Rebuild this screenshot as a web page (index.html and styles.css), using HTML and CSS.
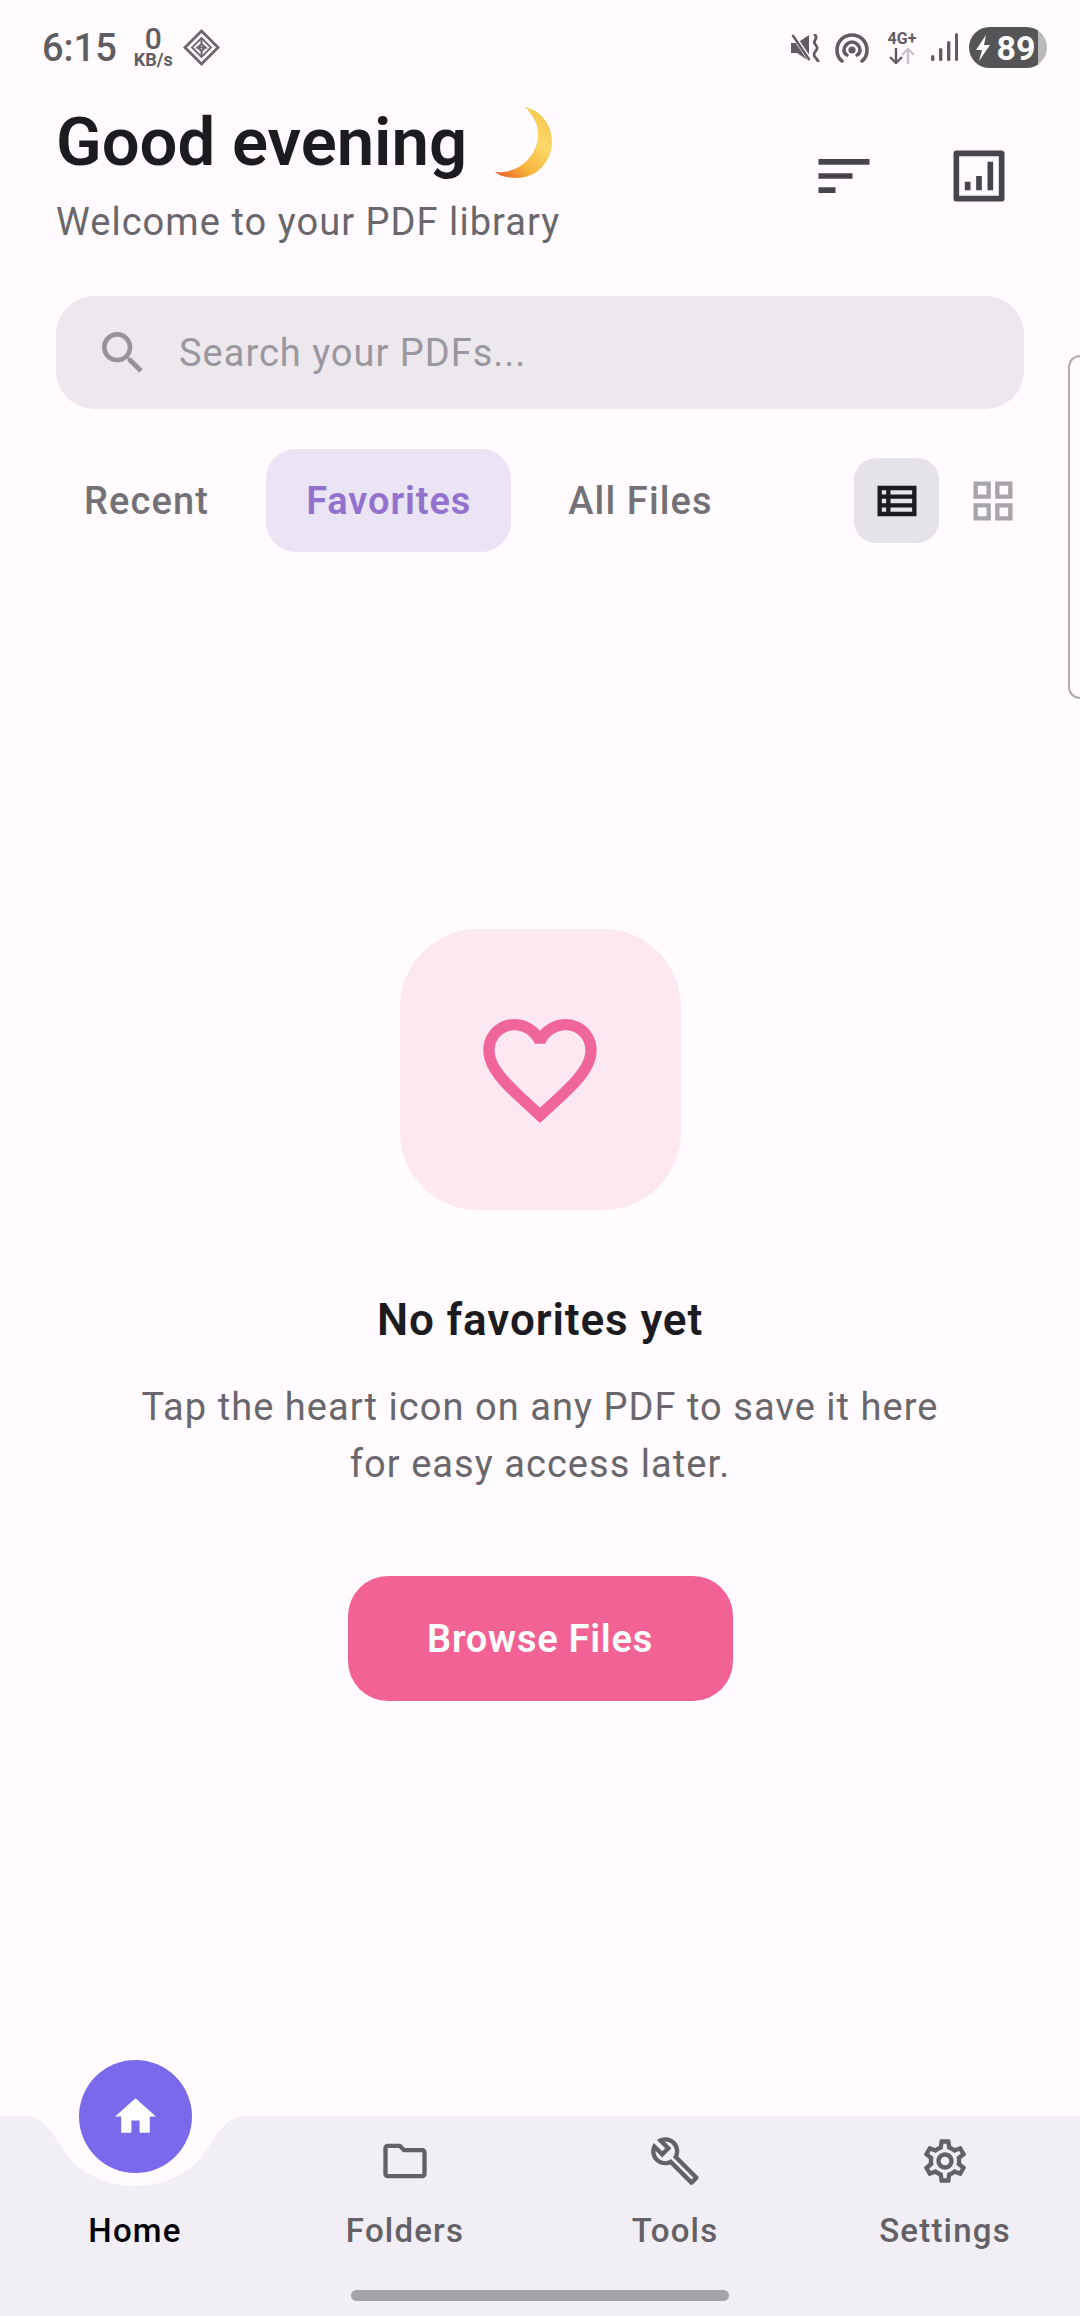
FILE: index.html
```html
<!DOCTYPE html>
<html lang="en">
<head>
  <meta charset="UTF-8" />
  <meta name="viewport" content="width=device-width, initial-scale=1" />
  <title>PDF library</title>
  <link rel="stylesheet" href="styles.css">
</head>
<body>
  <div class="page">
    <div class="status">
      <div class="status-left">
        <span class="time">6:15</span>
        <div class="speed"><span class="speed-num">0</span><span class="speed-unit">KB/s</span></div>
        <svg class="diamond" viewBox="0 0 37 37" fill="none" stroke="#6a686c" stroke-width="2.800">
          <path d="M18.500 2 35 18.500 18.500 35 2 18.500z"/>
          <path d="M18.500 9 28 18.500 18.500 28 9 18.500z" stroke-width="1.800"/>
          <path d="M18.500 9v6l-4 3.500h8l-4-3.500M18.500 28v-6l-4-3.500M18.500 22l4-3.500" stroke-width="2"/>
        </svg>
      </div>
      <div class="status-right">
        <svg class="ic-mute" viewBox="0 0 30 28" fill="#5f5d61">
          <path d="M0 9h6L18 1v26L6 19H0z"/>
          <path d="M2 1 19 26" stroke="#fffbff" stroke-width="4.500"/>
          <path d="M1.500 1 18.500 26" stroke="#5f5d61" stroke-width="2.400"/>
          <path d="M24 1c4 4-3 5 0 9s3 4 0 8 1 5 3 9" fill="none" stroke="#5f5d61" stroke-width="2.800" stroke-linecap="round"/>
        </svg>
        <svg class="ic-hotspot" viewBox="0 0 34 30" fill="none" stroke="#5f5d61" stroke-width="3.600" stroke-linecap="round">
          <path d="M7 28C3 25 2 21 2 17 2 8 9 2 17 2s15 6 15 15c0 4-1 8-5 11"/>
          <path d="M12 22c-2-1-3-3-3-5 0-4 4-8 8-8s8 4 8 8c0 2-1 4-3 5"/>
          <circle cx="17" cy="17" r="1.800" fill="#5f5d61"/>
        </svg>
        <div class="net">
          <span class="net-label">4G+</span>
          <svg class="net-arrows" viewBox="0 0 30 16" fill="none" stroke-width="2.400">
            <path d="M9 0v14M3 9l6 6 6-6" stroke="#5f5d61"/>
            <path d="M21 16V2M15 7l6-6 6 6" stroke="#c6c4c8"/>
          </svg>
        </div>
        <svg class="ic-signal" viewBox="0 0 27 29" fill="#5f5d61">
          <rect x="0" y="22" width="3.400" height="6" rx="1.500"/>
          <rect x="8" y="15" width="3.400" height="13" rx="1.500"/>
          <rect x="16" y="8" width="3.400" height="20" rx="1.500"/>
          <rect x="24" y="0" width="3" height="28" rx="1.500"/>
        </svg>
        <div class="battery">
          <svg class="bolt" viewBox="0 0 16 26" fill="#fff"><path d="M11 0 1 15h6l-3 11 11-16H9z"/></svg>
          <span>89</span>
        </div>
      </div>
    </div>

    <header class="header">
      <div>
        <h1 class="greeting">Good evening
          <svg class="moon" viewBox="0 0 57 71">
            <defs>
              <linearGradient id="moonFill" x1="0.9" y1="0" x2="0.1" y2="1">
                <stop offset="0" stop-color="#f4c24a"/>
                <stop offset="0.35" stop-color="#fbd868"/>
                <stop offset="0.7" stop-color="#f7b53c"/>
                <stop offset="1" stop-color="#e8652a"/>
              </linearGradient>
            </defs>
            <path fill="url(#moonFill)" d="M30 0C48 4 57 20 57 35 57 56 40 71 22 71 12 71 5 69 0 65 24 67 41 50 43 30 44 17 37 7 30 0Z"/>
          </svg>
        </h1>
        <p class="subtitle">Welcome to your PDF library</p>
      </div>
      <div class="header-actions">
        <svg class="ic-68" viewBox="0 0 24 24" fill="#47454c"><path d="M3 18h6v-2H3v2zM3 6v2h18V6H3zm0 7h12v-2H3v2z"/></svg>
        <svg class="ic-68" viewBox="0 0 24 24" fill="#47454c"><path d="M9 17H7v-3h2v3zm4 0h-2v-5h2v5zm4 0h-2V7h2v10zm2 2H5V5h14v14zm1-16H4c-.6 0-1 .4-1 1v16c0 .6.4 1 1 1h16c.6 0 1-.4 1-1V4c0-.6-.4-1-1-1z"/></svg>
      </div>
    </header>

    <div class="search">
      <svg class="search-icon" viewBox="0 0 24 24" fill="#969399"><path d="M15.500 14h-.79l-.28-.27C15.410 12.590 16 11.110 16 9.500 16 5.910 13.090 3 9.500 3S3 5.910 3 9.500 5.910 16 9.500 16c1.610 0 3.090-.59 4.230-1.570l.27.28v.79l5 4.990L20.490 19l-4.990-5zm-6 0C7.010 14 5 11.990 5 9.500S7.010 5 9.500 5 14 7.010 14 9.500 11.990 14 9.500 14z"/></svg>
      <span>Search your PDFs...</span>
    </div>

    <div class="tabs-row">
      <div class="tabs">
        <div class="tab">Recent</div>
        <div class="tab active">Favorites</div>
        <div class="tab">All Files</div>
      </div>
      <div class="view-toggle">
        <div class="view-btn selected">
          <svg viewBox="0 0 24 24" fill="#1c1b1f"><path fill-rule="evenodd" d="M3 5v14h18V5H3zm4 2v2H5V7h2zm-2 6v-2h2v2H5zm0 2h2v2H5v-2zm14 2H9v-2h10v2zm0-4H9v-2h10v2zm0-4H9V7h10v2z"/></svg>
        </div>
        <div class="view-btn">
          <svg viewBox="0 0 24 24" fill="#a7a5a9"><path d="M3 3v8h8V3H3zm6 6H5V5h4v4zm-6 4v8h8v-8H3zm6 6H5v-4h4v4zm4-16v8h8V3h-8zm6 6h-4V5h4v4zm-6 4v8h8v-8h-8zm6 6h-4v-4h4v4z"/></svg>
        </div>
      </div>
    </div>

    <div class="edge-handle"></div>

    <main class="empty">
      <div class="empty-icon">
        <svg viewBox="0 0 24 24" fill="#f1669a"><path d="M16.500 3c-1.740 0-3.410.81-4.500 2.090C10.910 3.810 9.240 3 7.500 3 4.420 3 2 5.420 2 8.500c0 3.780 3.400 6.860 8.550 11.540L12 21.350l1.450-1.320C18.600 15.360 22 12.280 22 8.500 22 5.420 19.580 3 16.500 3zm-4.400 15.550l-.1.1-.1-.1C7.140 14.240 4 11.390 4 8.500 4 6.500 5.500 5 7.500 5c1.540 0 3.040.99 3.570 2.360h1.870C13.460 5.990 14.960 5 16.500 5c2 0 3.500 1.500 3.500 3.500 0 2.890-3.140 5.740-7.900 10.050z"/></svg>
      </div>
      <h2 class="empty-title">No favorites yet</h2>
      <p class="empty-text">Tap the heart icon on any PDF to save it here<br>for easy access later.</p>
      <button class="browse-btn">Browse Files</button>
    </main>

    <nav class="nav">
      <svg class="nav-notch" viewBox="0 0 270 72"><path d="M26 0C50 1 58 32 75 48 90 62 112 70 135 70 158 70 180 62 195 48 212 32 220 1 244 0Z"/></svg>
      <div class="nav-fab">
        <svg viewBox="0 0 24 24" fill="#fff"><path d="M10 20v-6h4v6h5v-8h3L12 3 2 12h3v8z"/></svg>
      </div>
      <div class="nav-items">
        <div class="nav-item home"><div class="nav-icon"></div><span>Home</span></div>
        <div class="nav-item">
          <svg class="nav-icon" viewBox="0 0 24 24" fill="#636166"><path d="M20 6h-8l-2-2H4c-1.100 0-1.990.9-1.990 2L2 18c0 1.100.9 2 2 2h16c1.100 0 2-.9 2-2V8c0-1.100-.9-2-2-2zm0 12H4V6h5.170l2 2H20v10z"/></svg>
          <span>Folders</span>
        </div>
        <div class="nav-item">
          <svg class="nav-icon" viewBox="0 0 24 24" fill="#636166"><path d="M22.610 18.990l-9.080-9.080c.93-2.340.45-5.100-1.440-7C9.790.61 6.210.4 3.660 2.260L7.500 6.110 6.080 7.520 2.250 3.690C.39 6.230.6 9.820 2.900 12.110c1.860 1.860 4.570 2.350 6.890 1.480l9.110 9.110c.39.39 1.020.39 1.410 0l2.300-2.300c.4-.38.4-1.010 0-1.410zm-3 1.600l-9.460-9.460c-.61.45-1.290.72-2 .82-1.360.2-2.790-.21-3.830-1.250C3.370 9.760 2.930 8.500 3 7.260l3.090 3.090 4.240-4.240-3.090-3.090c1.240-.07 2.490.37 3.440 1.310 1.080 1.080 1.490 2.570 1.240 3.960-.12.71-.42 1.370-.88 1.960l9.450 9.450-.88.88z"/></svg>
          <span>Tools</span>
        </div>
        <div class="nav-item">
          <svg class="nav-icon" viewBox="0 0 24 24" fill="#636166"><path d="M19.430 12.980c.04-.32.07-.64.07-.98 0-.34-.03-.66-.07-.98l2.110-1.650c.19-.15.24-.42.12-.64l-2-3.460c-.09-.16-.26-.25-.44-.25-.06 0-.12.01-.17.03l-2.490 1c-.52-.4-1.080-.73-1.690-.98l-.38-2.650C14.460 2.180 14.250 2 14 2h-4c-.25 0-.46.18-.49.42l-.38 2.650c-.61.25-1.170.59-1.690.98l-2.490-1c-.06-.02-.12-.03-.18-.03-.17 0-.34.09-.43.25l-2 3.460c-.13.22-.07.49.12.64l2.110 1.650c-.04.32-.07.65-.07.98 0 .33.03.66.07.98l-2.110 1.650c-.19.15-.24.42-.12.64l2 3.460c.09.16.26.25.44.25.06 0 .12-.01.17-.03l2.490-1c.52.4 1.080.73 1.690.98l.38 2.650c.03.24.24.42.49.42h4c.25 0 .46-.18.49-.42l.38-2.650c.61-.25 1.170-.59 1.690-.98l2.490 1c.06.02.12.03.18.03.17 0 .34-.09.43-.25l2-3.460c.12-.22.07-.49-.12-.64l-2.110-1.650zm-1.980-1.710c.04.31.05.52.05.73 0 .21-.02.43-.05.73l-.14 1.130.89.7 1.080.84-.7 1.210-1.270-.51-1.040-.42-.9.68c-.43.32-.84.56-1.250.73l-1.060.43-.16 1.130-.2 1.350h-1.400l-.19-1.350-.16-1.130-1.060-.43c-.43-.18-.83-.41-1.230-.71l-.91-.7-1.060.43-1.270.51-.7-1.210 1.080-.84.89-.7-.14-1.130c-.03-.31-.05-.54-.05-.74s.02-.43.05-.73l.14-1.130-.89-.7-1.080-.84.7-1.210 1.270.51 1.040.42.9-.68c.43-.32.84-.56 1.250-.73l1.060-.43.16-1.130.2-1.350h1.390l.19 1.350.16 1.130 1.060.43c.43.18.83.41 1.230.71l.91.7 1.060-.43 1.270-.51.7 1.210-1.070.85-.89.7.14 1.130zM12 8c-2.210 0-4 1.790-4 4s1.790 4 4 4 4-1.790 4-4-1.790-4-4-4zm0 6c-1.100 0-2-.9-2-2s.9-2 2-2 2 .9 2 2-.9 2-2 2z"/></svg>
          <span>Settings</span>
        </div>
      </div>
      <div class="home-bar"></div>
    </nav>
  </div>
</body>
</html>
```

FILE: styles.css
```css
* {
  box-sizing: border-box;
}

html, body {
  margin: 0;
  padding: 0;
  background: #fffbff;
  font-family: Roboto, sans-serif;
}

.page {
  position: relative;
  display: flex;
  flex-direction: column;
  width: 1080px;
  height: 2316px;
  overflow: hidden;
}

/* status bar */
.status {
  display: flex;
  justify-content: space-between;
  align-items: center;
  height: 82px;
  padding: 27px 33px 14px 42px;
  color: #5f5d61;
}

.status-left,
.status-right {
  display: flex;
  align-items: center;
}

.time {
  font-size: 38px;
  font-weight: 500;
}

.speed {
  display: flex;
  flex-direction: column;
  align-items: center;
  margin-left: 17px;
}

.speed-num {
  font-size: 30px;
  font-weight: 500;
  line-height: 24px;
}

.speed-unit {
  font-size: 18px;
  font-weight: 700;
  line-height: 18px;
}

.diamond {
  width: 37px;
  height: 37px;
  margin-left: 10px;
}

.ic-mute {
  width: 30px;
  height: 28px;
}

.ic-hotspot {
  width: 34px;
  height: 30px;
  margin-left: 14px;
}

.net {
  display: flex;
  flex-direction: column;
  align-items: center;
  width: 34px;
  margin-left: 16px;
}

.net-label {
  font-size: 16px;
  font-weight: 700;
  line-height: 15px;
}

.net-arrows {
  width: 30px;
  height: 16px;
  margin-top: 2px;
}

.ic-signal {
  width: 27px;
  height: 29px;
  margin-left: 12px;
}

.battery {
  display: flex;
  align-items: center;
  justify-content: center;
  gap: 5px;
  width: 78px;
  height: 41px;
  margin-left: 11px;
  padding-right: 5px;
  border-radius: 21px;
  background: linear-gradient(90deg, #555456 88%, #b9b8ba 88%);
  color: #fff;
  font-size: 34px;
  font-weight: 700;
}

.bolt {
  width: 16px;
  height: 26px;
}

/* header */
.header {
  display: flex;
  justify-content: space-between;
  align-items: center;
  padding: 20px 67px 0 56px;
}

.greeting {
  display: flex;
  align-items: center;
  gap: 28px;
  margin: 0;
  font-size: 67px;
  font-weight: 600;
  line-height: 80px;
  color: #1c1b1f;
}

.moon {
  width: 57px;
  height: 71px;
}

.subtitle {
  margin: 12px 0 0;
  font-size: 38px;
  line-height: 56px;
  letter-spacing: 1.05px;
  color: #69676c;
}

.header-actions {
  display: flex;
  gap: 67px;
}

.ic-68 {
  display: block;
  width: 68px;
  height: 68px;
}

/* search */
.search {
  display: flex;
  align-items: center;
  gap: 28px;
  height: 113px;
  margin: 46px 56px 0;
  padding-left: 39px;
  border-radius: 38px;
  background: #ece8ee;
  font-size: 38px;
  letter-spacing: 1px;
  color: #9a979f;
}

.search-icon {
  width: 56px;
  height: 56px;
}

/* tabs */
.tabs-row {
  display: flex;
  justify-content: space-between;
  align-items: center;
  height: 103px;
  margin-top: 40px;
  padding: 0 45px;
}

.tabs {
  display: flex;
  gap: 18px;
}

.tab {
  display: flex;
  align-items: center;
  height: 103px;
  padding: 0 39px;
  border-radius: 30px;
  font-size: 38px;
  font-weight: 500;
  letter-spacing: 1.15px;
  color: #737176;
}

.tab.active {
  padding: 0 40px;
  background: #eae4f4;
  color: #9272cc;
  font-weight: 600;
  letter-spacing: 0.9px;
}

.view-toggle {
  display: flex;
  gap: 11px;
}

.view-btn {
  display: flex;
  align-items: center;
  justify-content: center;
  width: 85px;
  height: 85px;
  border-radius: 22px;
}

.view-btn.selected {
  background: #e5e2e8;
}

.view-btn svg {
  width: 52px;
  height: 52px;
}

.edge-handle {
  position: absolute;
  top: 355px;
  right: 0;
  width: 12px;
  height: 344px;
  border: 2px solid #aeadb1;
  border-right: none;
  border-radius: 12px 0 0 12px;
}

/* empty state */
.empty {
  flex: 1;
  display: flex;
  flex-direction: column;
  align-items: center;
  padding-top: 377px;
  text-align: center;
}

.empty-icon {
  display: flex;
  align-items: center;
  justify-content: center;
  width: 281px;
  height: 281px;
  border-radius: 78px;
  background: #fde8f2;
}

.empty-icon svg {
  width: 136px;
  height: 136px;
}

.empty-title {
  margin: 80px 0 0;
  font-size: 44px;
  font-weight: 600;
  line-height: 60px;
  letter-spacing: 0.9px;
  color: #1c1b1f;
}

.empty-text {
  margin: 29px 0 0;
  font-size: 38px;
  line-height: 57px;
  letter-spacing: 1.05px;
  color: #69676c;
}

.browse-btn {
  width: 385px;
  height: 125px;
  margin-top: 83px;
  border: none;
  border-radius: 40px;
  background: #f36294;
  color: #fff;
  font-family: inherit;
  font-size: 38px;
  font-weight: 600;
  letter-spacing: 0.75px;
}

/* bottom nav */
.nav {
  position: relative;
  height: 200px;
  padding-top: 19px;
  background: #f2eef6;
}

.nav-notch {
  position: absolute;
  top: 0;
  left: 0;
  width: 270px;
  height: 72px;
  fill: #fffbff;
}

.nav-fab {
  position: absolute;
  top: -56px;
  left: 79px;
  display: flex;
  align-items: center;
  justify-content: center;
  width: 113px;
  height: 113px;
  border-radius: 50%;
  background: #7b69ec;
}

.nav-fab svg {
  width: 49px;
  height: 49px;
}

.nav-items {
  display: grid;
  grid-template-columns: repeat(4, 1fr);
}

.nav-item {
  display: flex;
  flex-direction: column;
  align-items: center;
  font-size: 33px;
  font-weight: 500;
  line-height: 44px;
  letter-spacing: 1.2px;
  color: #636166;
}

.nav-item.home {
  color: #000;
}

.nav-icon {
  display: block;
  width: 52px;
  height: 52px;
  margin-bottom: 22px;
}

.home-bar {
  width: 378px;
  height: 11px;
  margin: 37px auto 0;
  border-radius: 6px;
  background: #a5a3a8;
}
```
